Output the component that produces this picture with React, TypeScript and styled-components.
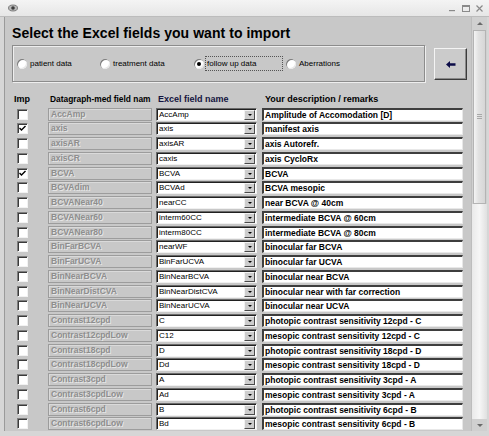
import React from 'react';
import styled, { createGlobalStyle } from 'styled-components';

const GlobalStyle = createGlobalStyle`
  html, body {
    margin: 0;
    padding: 0;
    background: #c8c8c8;
    font-family: "Liberation Sans", Arial, sans-serif;
  }
`;

const Window = styled.div`
  width: 489px;
  height: 436px;
  display: flex;
  flex-direction: column;
  background: #d6d6d6;
  box-sizing: border-box;
  overflow: hidden;
`;

const TitleBar = styled.div`
  height: 16px;
  flex: none;
  display: flex;
  align-items: center;
  justify-content: space-between;
  padding: 0 6px 0 8px;
  background: linear-gradient(#f4f4f4, #e6e6e6);
  border-bottom: 1px solid #bcbcbc;
`;

const TitleControls = styled.div`
  display: flex;
  gap: 6px;
  align-items: center;
  color: #8a8a8a;
`;

const Frame = styled.div`
  flex: 1;
  display: flex;
  padding: 0 2px 5px 4px;
  min-height: 0;
`;

const Content = styled.div`
  flex: 1;
  background: #c8c8c8;
  border-left: 1px solid #9a9a9a;
  padding: 8px 0 0 7px;
  overflow: hidden;
  display: flex;
  flex-direction: column;
`;

const Heading = styled.h1`
  margin: 0;
  font-size: 14px;
  line-height: 17px;
  font-weight: bold;
  color: #000;
  letter-spacing: 0.05px;
`;

const TopRow = styled.div`
  display: flex;
  align-items: flex-start;
  gap: 9px;
  margin-top: 3px;
`;

const GroupBox = styled.div`
  width: 407px;
  height: 35px;
  border: 1px solid #8c8c8c;
  box-shadow: inset 1px 1px #eeeeee, 1px 1px #eeeeee;
  display: flex;
  align-items: center;
  padding-left: 4px;
  box-sizing: content-box;
`;

const RadioItem = styled.label<{ $w: number; $focus?: boolean }>`
  width: ${(p) => p.$w}px;
  display: flex;
  align-items: center;
  font-size: 8px;
  color: #000;
  span {
    padding: 2px 1px;
    border: 1px dotted ${(p) => (p.$focus ? '#555' : 'transparent')};
    width: ${(p) => (p.$focus ? '74px' : 'auto')};
  }
`;

const RadioCircle = styled.span<{ $on?: boolean }>`
  width: 10px !important;
  height: 10px;
  padding: 0 !important;
  border: none !important;
  box-sizing: border-box;
  border-radius: 50%;
  background: #fff;
  box-shadow: inset 1px 1px #7a7a7a, inset -1px -1px #e8e8e8;
  margin-right: 1px;
  position: relative;
  flex: none;
  &::after {
    content: '';
    display: ${(p) => (p.$on ? 'block' : 'none')};
    position: absolute;
    left: 3px;
    top: 3px;
    width: 4px;
    height: 4px;
    border-radius: 50%;
    background: #000;
  }
`;

const ArrowButton = styled.button`
  width: 33px;
  height: 32px;
  margin-top: 3px;
  padding: 0;
  background: #cbcbcb;
  border: 1px solid;
  border-color: #f4f4f4 #3c3c3c #3c3c3c #f4f4f4;
  box-shadow: inset -1px -1px #8a8a8a;
  display: flex;
  align-items: center;
  justify-content: center;
`;

const Grid = styled.div`
  display: grid;
  grid-template-columns: 32px 104px 102px 201px;
  column-gap: 4px;
  grid-auto-rows: 14.75px;
  align-items: center;
  margin-top: 10px;
  & > :nth-child(4n + 3) {
    margin-right: 1px;
  }
`;

const HeadCell = styled.div<{ $pad?: number; $navy?: boolean; $size?: number }>`
  font-size: ${(p) => p.$size ?? 9}px;
  font-weight: bold;
  color: ${(p) => (p.$navy ? '#141440' : '#000')};
  padding-left: ${(p) => p.$pad ?? 0}px;
  padding-top: 2px;
  white-space: nowrap;
  align-self: start;
  line-height: 11px;
`;

const CheckCell = styled.div`
  padding-left: 5px;
  display: flex;
  align-items: center;
`;

const CheckBox = styled.span`
  width: 11px;
  height: 11px;
  box-sizing: border-box;
  background: #fff;
  border-top: 1px solid #7e7e7e;
  border-left: 1px solid #7e7e7e;
  border-right: 1px solid #f2f2f2;
  border-bottom: 1px solid #f2f2f2;
  box-shadow: inset 1px 1px #3a3a3a;
  display: flex;
  align-items: center;
  justify-content: center;
`;

const FieldBox = styled.div`
  height: 13px;
  box-sizing: border-box;
  border: 1px solid #9c9c9c;
  box-shadow: inset 1px 1px #dadada;
  padding-left: 2px;
  font-size: 8.5px;
  font-weight: bold;
  line-height: 11px;
  color: #8e8e8e;
  text-shadow: 1px 1px #e6e6e6;
  white-space: nowrap;
  overflow: hidden;
`;

const Combo = styled.div`
  height: 13px;
  box-sizing: border-box;
  display: flex;
  background: #fff;
  border-top: 1px solid #6a6a6a;
  border-left: 1px solid #6a6a6a;
  border-right: 1px solid #f0f0f0;
  border-bottom: 1px solid #f0f0f0;
  box-shadow: inset 1px 1px #202020;
`;

const ComboText = styled.div`
  flex: 1;
  font-size: 8px;
  line-height: 11px;
  padding-left: 2px;
  color: #000;
  white-space: nowrap;
  overflow: hidden;
`;

const DropButton = styled.div`
  width: 11px;
  height: 10px;
  margin: 1px 1px 0 0;
  box-sizing: border-box;
  background: #cdcdcd;
  border: 1px solid;
  border-color: #f2f2f2 #4a4a4a #4a4a4a #f2f2f2;
  display: flex;
  align-items: center;
  justify-content: center;
  &::after {
    content: '';
    border-left: 2px solid transparent;
    border-right: 2px solid transparent;
    border-top: 2px solid #000;
  }
`;

const DescBox = styled.div`
  height: 13px;
  box-sizing: border-box;
  background: #fff;
  border-top: 2px solid #3e3e3e;
  border-left: 2px solid #3e3e3e;
  border-right: 1px solid #e8e8e8;
  border-bottom: 1px solid #e8e8e8;
  padding-left: 1px;
  font-size: 8.5px;
  font-weight: bold;
  line-height: 10px;
  color: #000;
  white-space: nowrap;
  overflow: hidden;
`;

const ScrollBar = styled.div`
  width: 15px;
  flex: none;
  background: #d0d0d0;
  display: flex;
  flex-direction: column;
  border-left: 1px solid #bdbdbd;
`;

const ScrollArrow = styled.div<{ $down?: boolean }>`
  height: 12px;
  flex: none;
  display: flex;
  align-items: center;
  justify-content: center;
  &::after {
    content: '';
    border-left: 3px solid transparent;
    border-right: 3px solid transparent;
    ${(p) => (p.$down ? 'border-top: 3px solid #6a6a6a;' : 'border-bottom: 3px solid #6a6a6a;')}
  }
`;

const ScrollThumb = styled.div`
  height: 172px;
  margin: 1px 1px 0 1px;
  background: linear-gradient(90deg, #f4f4f4, #e2e2e2 40%, #d6d6d6);
  border: 1px solid #b4b4b4;
  display: flex;
  align-items: center;
  justify-content: center;
  &::after {
    content: '';
    width: 5px;
    height: 6px;
    background: repeating-linear-gradient(#a8a8a8 0 1px, transparent 1px 2px);
  }
`;

const ScrollTrack = styled.div`
  flex: 1;
  background: linear-gradient(90deg, #eaeaea, #f6f6f6 50%, #e0e0e0);
`;

type Row = { field: string; excel: string; desc: string; on?: boolean };

const rows: Row[] = [
  { field: 'AccAmp', excel: 'AccAmp', desc: 'Amplitude of Accomodation [D]' },
  { field: 'axis', excel: 'axis', desc: 'manifest axis', on: true },
  { field: 'axisAR', excel: 'axisAR', desc: 'axis Autorefr.' },
  { field: 'axisCR', excel: 'caxis', desc: 'axis CycloRx' },
  { field: 'BCVA', excel: 'BCVA', desc: 'BCVA', on: true },
  { field: 'BCVAdim', excel: 'BCVAd', desc: 'BCVA mesopic' },
  { field: 'BCVANear40', excel: 'nearCC', desc: 'near BCVA @ 40cm' },
  { field: 'BCVANear60', excel: 'interm60CC', desc: 'intermediate BCVA @ 60cm' },
  { field: 'BCVANear80', excel: 'interm80CC', desc: 'intermediate BCVA @ 80cm' },
  { field: 'BinFarBCVA', excel: 'nearWF', desc: 'binocular far BCVA' },
  { field: 'BinFarUCVA', excel: 'BinFarUCVA', desc: 'binocular far UCVA' },
  { field: 'BinNearBCVA', excel: 'BinNearBCVA', desc: 'binocular near BCVA' },
  { field: 'BinNearDistCVA', excel: 'BinNearDistCVA', desc: 'binocular near with far correction' },
  { field: 'BinNearUCVA', excel: 'BinNearUCVA', desc: 'binocular near UCVA' },
  { field: 'Contrast12cpd', excel: 'C', desc: 'photopic contrast sensitivity 12cpd - C' },
  { field: 'Contrast12cpdLow', excel: 'C12', desc: 'mesopic contrast sensitivity 12cpd - C' },
  { field: 'Contrast18cpd', excel: 'D', desc: 'photopic contrast sensitivity 18cpd - D' },
  { field: 'Contrast18cpdLow', excel: 'Dd', desc: 'mesopic contrast sensitivity 18cpd - D' },
  { field: 'Contrast3cpd', excel: 'A', desc: 'photopic contrast sensitivity 3cpd - A' },
  { field: 'Contrast3cpdLow', excel: 'Ad', desc: 'mesopic contrast sensitivity 3cpd - A' },
  { field: 'Contrast6cpd', excel: 'B', desc: 'photopic contrast sensitivity 6cpd - B' },
  { field: 'Contrast6cpdLow', excel: 'Bd', desc: 'mesopic contrast sensitivity 6cpd - B' },
];

const radios = [
  { label: 'patient data', w: 83 },
  { label: 'treatment data', w: 94 },
  { label: 'follow up data', w: 92, on: true },
  { label: 'Aberrations', w: 80 },
];

const App: React.FC = () => {
  return (
    <>
      <GlobalStyle />
      <Window>
        <TitleBar>
          <svg width="10" height="8" viewBox="0 0 10 8">
            <ellipse cx="5" cy="4" rx="4.5" ry="3" fill="#b8b8b8" stroke="#6a6a6a" strokeWidth="0.8" />
            <circle cx="5" cy="4" r="1.8" fill="#3a3a3a" />
          </svg>
          <TitleControls>
            <svg width="7" height="7" viewBox="0 0 7 7">
              <rect x="0" y="5" width="6" height="1.2" fill="#8a8a8a" />
            </svg>
            <svg width="8" height="7" viewBox="0 0 8 7">
              <rect x="0.5" y="0.5" width="7" height="6" fill="none" stroke="#8a8a8a" />
              <rect x="0.5" y="0.5" width="7" height="1.5" fill="#8a8a8a" />
            </svg>
            <svg width="7" height="7" viewBox="0 0 7 7">
              <path d="M0.5 0.5 L6.5 6.5 M6.5 0.5 L0.5 6.5" stroke="#8a8a8a" strokeWidth="1.2" />
            </svg>
          </TitleControls>
        </TitleBar>
        <Frame>
          <Content>
            <Heading>Select the Excel fields you want to import</Heading>
            <TopRow>
              <GroupBox>
                {radios.map((r) => (
                  <RadioItem key={r.label} $w={r.w} $focus={r.on}>
                    <RadioCircle $on={r.on} />
                    <span>{r.label}</span>
                  </RadioItem>
                ))}
              </GroupBox>
              <ArrowButton>
                <svg width="10" height="7" viewBox="0 0 10 7">
                  <path d="M0 3.5 L4 0 L4 2.3 L9.5 2.3 L9.5 4.7 L4 4.7 L4 7 Z" fill="#0c0c48" />
                </svg>
              </ArrowButton>
            </TopRow>
            <Grid>
              <HeadCell $pad={2}>Imp</HeadCell>
              <HeadCell $pad={2} $size={8.4}>Datagraph-med field nam</HeadCell>
              <HeadCell $pad={2} $navy>Excel field name</HeadCell>
              <HeadCell $pad={3}>Your description / remarks</HeadCell>
              {rows.map((r) => (
                <React.Fragment key={r.field}>
                  <CheckCell>
                    <CheckBox>
                      {r.on && (
                        <svg width="7" height="7" viewBox="0 0 7 7">
                          <path d="M0.5 3 L2.5 5 L6.5 1" fill="none" stroke="#000" strokeWidth="1.4" />
                        </svg>
                      )}
                    </CheckBox>
                  </CheckCell>
                  <FieldBox>{r.field}</FieldBox>
                  <Combo>
                    <ComboText>{r.excel}</ComboText>
                    <DropButton />
                  </Combo>
                  <DescBox>{r.desc}</DescBox>
                </React.Fragment>
              ))}
            </Grid>
          </Content>
          <ScrollBar>
            <ScrollArrow />
            <ScrollThumb />
            <ScrollTrack />
            <ScrollArrow $down />
          </ScrollBar>
        </Frame>
      </Window>
    </>
  );
};

export default App;
